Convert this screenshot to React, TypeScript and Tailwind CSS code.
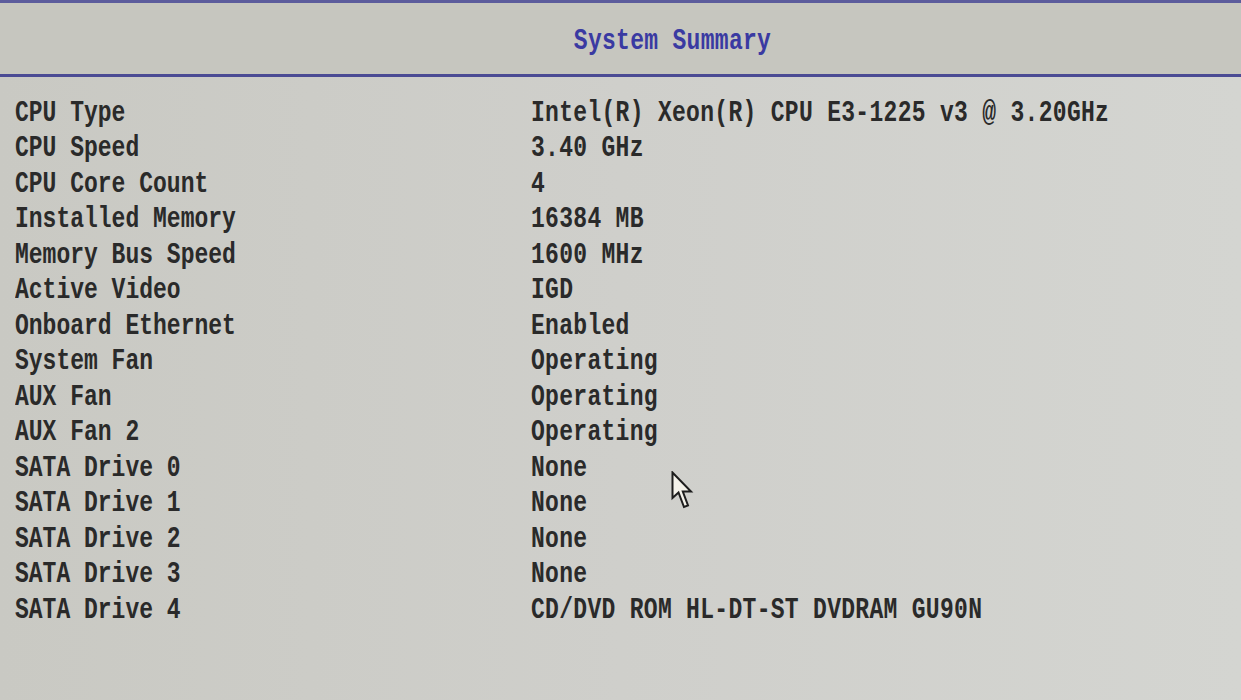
import React from 'react';

const ROWS: [string, string][] = [
  ['CPU Type', 'Intel(R) Xeon(R) CPU E3-1225 v3 @ 3.20GHz'],
  ['CPU Speed', '3.40 GHz'],
  ['CPU Core Count', '4'],
  ['Installed Memory', '16384 MB'],
  ['Memory Bus Speed', '1600 MHz'],
  ['Active Video', 'IGD'],
  ['Onboard Ethernet', 'Enabled'],
  ['System Fan', 'Operating'],
  ['AUX Fan', 'Operating'],
  ['AUX Fan 2', 'Operating'],
  ['SATA Drive 0', 'None'],
  ['SATA Drive 1', 'None'],
  ['SATA Drive 2', 'None'],
  ['SATA Drive 3', 'None'],
  ['SATA Drive 4', 'CD/DVD ROM HL-DT-ST DVDRAM GU90N'],
];

function Pointer() {
  return (
    <svg
      className="absolute left-[671px] top-[471px]"
      width="24"
      height="40"
      viewBox="0 0 24 40"
    >
      <path
        d="M1.5 1.5 L1.5 27 L7.5 21.5 L13 36 L17 34.5 L11.8 20.5 L20 20.5 Z"
        fill="#f4f2ea"
        stroke="#1d1d1d"
        strokeWidth="2"
        strokeLinejoin="miter"
      />
    </svg>
  );
}

export default function App() {
  return (
    <div
      className="relative w-[1241px] h-[700px] overflow-hidden bg-gradient-to-r from-[#c9c9c3] via-[#cfcfcb] to-[#d4d5d1] text-[#2a2a2a]"
      style={{ fontFamily: '"Liberation Mono", "DejaVu Sans Mono", monospace' }}
    >
      {/* title bar */}
      <div className="h-[77px] border-t-[3px] border-t-[#5c5c9c] border-b-[3px] border-b-[#4b4b94] flex items-center justify-center pl-[104px] bg-[#c6c6bf]">
        <span className="text-[23px] font-bold text-[#3a3aa2] tracking-[0.3px] scale-y-[1.32] inline-block mt-[5px]">
          System Summary
        </span>
      </div>

      {/* item list */}
      <div className="pt-[18px]">
        {ROWS.map(([label, value]) => (
          <div key={label} className="flex h-[35.5px] items-center">
            <span className="w-[531px] shrink-0 pl-[15px] text-[23px] font-bold tracking-[0px] scale-y-[1.32] origin-left whitespace-pre">
              {label}
            </span>
            <span className="text-[23px] font-bold tracking-[0.3px] scale-y-[1.32] origin-left whitespace-pre">
              {value}
            </span>
          </div>
        ))}
      </div>

      <Pointer />
    </div>
  );
}
